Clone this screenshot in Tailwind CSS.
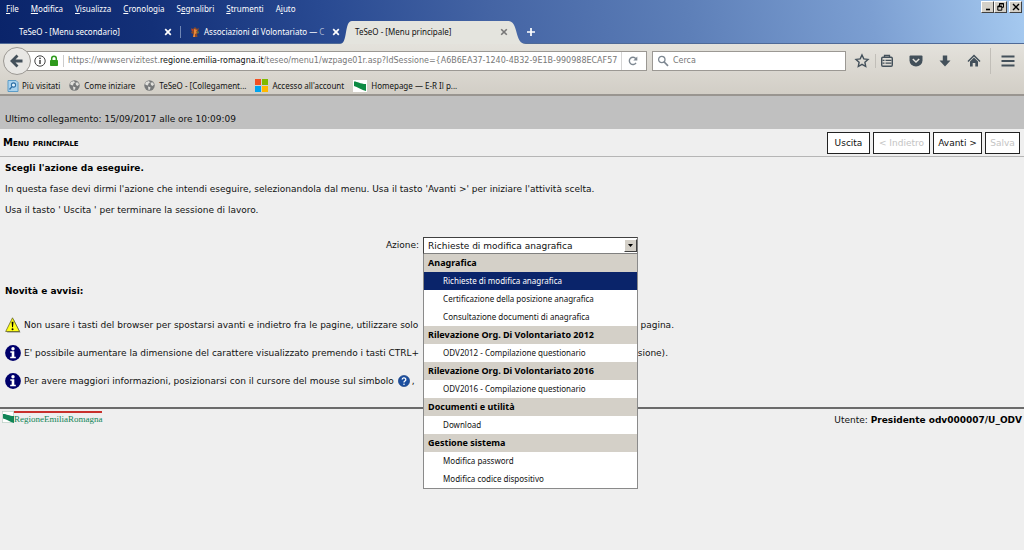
<!DOCTYPE html>
<html lang="it">
<head>
<meta charset="utf-8">
<title>TeSeO - [Menu principale]</title>
<script src="https://cdn.jsdelivr.net/npm/@tailwindcss/browser@4"></script>
</head>
<body class="min-h-screen bg-[#efefef] font-['DejaVu_Sans',sans-serif] text-[9px] leading-[21px] text-[#111]">

<!-- Browser window -->
<header class="font-['Noto_Sans',sans-serif] text-[8px] leading-3">
  <div class="bg-[linear-gradient(80deg,#0a246a_0%,#133078_15%,#294a92_32%,#4464a4_48%,#5d7fb8_67%,#7c9fd2_85%,#a6caf0_100%)] border-b border-[#4f6a97]">
    <div class="flex h-[21px] items-start justify-between">
      <nav class="flex gap-3 pl-1.5 pt-[3px] text-white" aria-label="Menu del browser">
        <button type="button"><u>F</u>ile</button>
        <button type="button"><u>M</u>odifica</button>
        <button type="button"><u>V</u>isualizza</button>
        <button type="button"><u>C</u>ronologia</button>
        <button type="button">S<u>e</u>gnalibri</button>
        <button type="button"><u>S</u>trumenti</button>
        <button type="button">A<u>i</u>uto</button>
      </nav>
      <div class="flex pr-0.5 pt-px">
        <button type="button" aria-label="Riduci a icona" class="flex h-3 w-[13px] items-center justify-center border border-t-white border-l-white border-r-[#404040] border-b-[#404040] bg-[#d4d0c8]"><svg class="h-2.5 w-2.5" viewBox="0 0 10 10"><path d="M3 7.500h4" stroke="#000" stroke-width="1.600"/></svg></button>
        <button type="button" aria-label="Ripristina" class="flex h-3 w-[13px] items-center justify-center border border-t-white border-l-white border-r-[#404040] border-b-[#404040] bg-[#d4d0c8]"><svg class="h-2.5 w-2.5" viewBox="0 0 10 10" fill="none" stroke="#000"><path d="M3.500 4V1.500h4v3.800H6"/><path d="M3.500 1.700h4M1.800 4.500h4" stroke-width="1.500"/><path d="M1.800 4.200h4v4h-4z"/></svg></button>
        <button type="button" aria-label="Chiudi" class="ml-0.5 flex h-3 w-[13px] items-center justify-center border border-t-white border-l-white border-r-[#404040] border-b-[#404040] bg-[#d4d0c8]"><svg class="h-2.5 w-2.5" viewBox="0 0 10 10"><path d="M2 2l6 6M8 2l-6 6" stroke="#000" stroke-width="1.400"/></svg></button>
      </div>
    </div>
    <div class="flex h-[22px] items-center">
      <div class="flex w-[180px] items-center justify-between pl-[19px] pr-2 text-white">
        <a href="#" class="whitespace-nowrap">TeSeO - [Menu secondario]</a>
        <button type="button" aria-label="Chiudi scheda"><svg class="h-2 w-2" viewBox="0 0 8 8"><path d="M1.200 1.200l5.600 5.600M6.800 1.200L1.200 6.800" stroke="#fff" stroke-width="1.700"/></svg></button>
      </div>
      <div class="flex w-[160px] items-center border-l border-[#7087b5] pl-2 text-white">
        <svg class="mr-[3px] h-3 w-3 shrink-0" viewBox="0 0 12 12"><path d="M2 2l2 1 2-2 2 2 2-1-1 3 1 2-2 1 .5 3H4l.5-3L2 7l1-2z" fill="#8a4a2a"/><path d="M5 3l3 1-1 2 1 1-2 1v3H4l1-4z" fill="#e8883a"/><circle cx="3.400" cy="4" r="1" fill="#c33d28"/><circle cx="9" cy="6.300" r="1" fill="#4d7a4b"/></svg>
        <a href="#" class="min-w-0 flex-1 whitespace-nowrap">Associazioni di Volontariato — <span class="text-white/60">C</span></a>
        <button type="button" aria-label="Chiudi scheda"><svg class="h-2 w-2" viewBox="0 0 8 8"><path d="M1.200 1.200l5.600 5.600M6.800 1.200L1.200 6.800" stroke="#fff" stroke-width="1.700"/></svg></button>
      </div>
      <div class="flex h-[23px] w-[186px] self-start text-[#111]">
        <svg class="h-[23px] w-3 shrink-0" viewBox="0 0 12 23"><path d="M0 23C8 23 4 0 12 0V23z" fill="#e4e4de"/></svg>
        <div class="flex min-w-0 flex-1 items-center justify-between bg-[#e4e4de] pb-0.5 pl-[3px]">
          <a href="#" class="whitespace-nowrap">TeSeO - [Menu principale]</a>
          <button type="button" aria-label="Chiudi scheda"><svg class="h-2 w-2" viewBox="0 0 8 8"><path d="M1.200 1.200l5.600 5.600M6.800 1.200L1.200 6.800" stroke="#777" stroke-width="1.600"/></svg></button>
        </div>
        <svg class="h-[23px] w-[18px] shrink-0" viewBox="0 0 18 23"><path d="M0 0C11 0 6 23 18 23H0z" fill="#e4e4de"/></svg>
      </div>
      <button type="button" aria-label="Nuova scheda"><svg class="h-2.5 w-2.5" viewBox="0 0 10 10"><path d="M5 1v8M1 5h8" stroke="#fff" stroke-width="1.700"/></svg></button>
    </div>
  </div>

  <div class="bg-linear-to-b from-[#e4e2dc] to-[#d2cec6] border-b-2 border-[#999590]">
    <div class="flex h-[33px] items-center pl-[3px] pr-[9px]">
      <button type="button" aria-label="Indietro" class="relative z-10 flex h-7 w-7 shrink-0 items-center justify-center rounded-full border border-[#9b9893] bg-[#e8e7e4]"><svg class="h-3.5 w-3.5" viewBox="0 0 14 14"><path d="M7.500 1.500L2 7l5.500 5.500M2.500 7h10" fill="none" stroke="#43505a" stroke-width="2.800"/></svg></button>
      <div class="-ml-2 flex h-5 min-w-0 flex-1 items-center border border-[#9b9893] bg-white pl-2.5 pr-2">
        <svg class="h-3 w-3 shrink-0" viewBox="0 0 12 12"><circle cx="6" cy="6" r="5.200" fill="none" stroke="#444"/><circle cx="6" cy="3.400" r=".8" fill="#333"/><path d="M6 5v4" stroke="#333" stroke-width="1.400"/></svg>
        <svg class="ml-[3px] h-3 w-2.5 shrink-0" viewBox="0 0 10 12"><path d="M2.700 6V3.600a2.300 2.300 0 0 1 4.600 0V6" fill="none" stroke="#2f9a1c" stroke-width="1.500"/><rect x="1" y="5" width="8" height="6" rx=".8" fill="#2f9a1c"/></svg>
        <span class="ml-1 h-3 border-l border-[#ccc]"></span>
        <div role="textbox" contenteditable="true" spellcheck="false" aria-label="Indirizzo" class="ml-1 min-w-0 flex-1 overflow-hidden whitespace-nowrap font-['DejaVu_Sans',sans-serif] text-[#777]">https://wwwservizitest.<span class="text-[#111]">regione.emilia-romagna.it</span>/teseo/menu1/wzpage01r.asp?IdSessione={A6B6EA37-1240-4B32-9E1B-990988ECAF57</div>
        <span class="mr-1.5 h-[18px] border-l border-[#d5d5d5]"></span>
        <button type="button" aria-label="Ricarica"><svg class="h-2.5 w-2.5" viewBox="0 0 10 10"><path d="M8 6.800A3.600 3.600 0 1 1 7.800 2.700" fill="none" stroke="#7d8791" stroke-width="1.400"/><path d="M9.300.5v4H5.300z" fill="#7d8791"/></svg></button>
      </div>
      <label class="ml-[5px] flex h-5 w-[194px] items-center border border-[#9b9893] bg-white pl-1">
        <svg class="mr-1 h-3 w-3 shrink-0" viewBox="0 0 12 12" fill="none" stroke="#7d8791"><circle cx="4.800" cy="4.500" r="3.200" stroke-width="1.300"/><path d="M7.200 7l3.800 3.800" stroke-width="1.700"/></svg>
        <input type="search" aria-label="Cerca" placeholder="Cerca" class="min-w-0 flex-1 font-['DejaVu_Sans',sans-serif] outline-none placeholder:text-[#777]">
      </label>
      <div class="ml-2 flex shrink-0 items-center text-[#43505a]">
        <button type="button" aria-label="Aggiungi ai segnalibri"><svg class="h-4 w-4" viewBox="0 0 16 16"><path d="M8 2l1.800 3.900 4.200.5-3.100 2.900.8 4.200L8 11.400l-3.700 2.100.8-4.200L2 6.400l4.200-.5z" fill="none" stroke="currentColor" stroke-width="1.400"/></svg></button>
        <span class="ml-[5px] h-3.5 border-l border-[#c1beb8]"></span>
        <button type="button" aria-label="Segnalibri" class="ml-1"><svg class="h-3.5 w-3.5" viewBox="0 0 14 14" fill="none" stroke="currentColor"><path d="M4.500 3V1.500h5V3" stroke-width="1.300"/><rect x="1.700" y="3.200" width="10.600" height="9" rx="1.200" stroke-width="1.400"/><path d="M2.500 6.300h2M5.500 6.300h6M2.500 9.200h2M5.500 9.200h6" stroke-width="1.300"/></svg></button>
        <button type="button" aria-label="Pocket" class="ml-[15px]"><svg class="h-3.5 w-3.5" viewBox="0 0 14 14"><path d="M1.500 1.500h11q1 0 1 1V6.500a6.500 6 0 0 1-13 0v-4q0-1 1-1z" fill="currentColor"/><path d="M3.800 5L7 8l3.200-3" fill="none" stroke="#e4e2dc" stroke-width="1.500"/></svg></button>
        <button type="button" aria-label="Download" class="ml-[15px]"><svg class="h-3.5 w-3.5" viewBox="0 0 14 14"><path d="M4.800 1.500h4.400V6.500H12.500L7 12.500 1.500 6.500h3.300z" fill="currentColor"/></svg></button>
        <button type="button" aria-label="Pagina iniziale" class="ml-[15px]"><svg class="h-3.5 w-3.5" viewBox="0 0 14 14"><path d="M1 7.500l6-6 6 6" fill="none" stroke="currentColor" stroke-width="1.500"/><path d="M3 7.500l4-4 4 4v5H8.300V9H5.700v3.500H3z" fill="currentColor"/></svg></button>
        <span class="ml-[9px] h-[26px] border-l border-[#c1beb8]"></span>
        <button type="button" aria-label="Apri menu" class="ml-2.5"><svg class="h-3.5 w-3.5" viewBox="0 0 14 14"><path d="M.5 2.500h13M.5 7h13M.5 11.500h13" stroke="currentColor" stroke-width="2.200"/></svg></button>
      </div>
    </div>
    <nav class="flex h-[17px] items-center gap-[9px] pl-[7px] text-[#111]" aria-label="Segnalibri">
      <a href="#" class="flex items-center gap-[3px]"><svg class="h-3 w-3" viewBox="0 0 12 12"><path d="M1 .5h8l2 2v9H1z" fill="#a9d2ee" stroke="#5c9cc7"/><circle cx="6.500" cy="5" r="2.100" fill="#e2f2fc" stroke="#2e6fa5" stroke-width="1.100"/><path d="M5 6.600L2.500 9.500" stroke="#2e6fa5" stroke-width="1.400"/></svg>Più visitati</a>
      <a href="#" class="flex items-center gap-1"><svg class="h-[11px] w-[11px]" viewBox="0 0 11 11"><circle cx="5.500" cy="5.500" r="5.200" fill="#77797a"/><path d="M2 2l3-1 1 1.500-1.500 1L4 5.500 2 5 1 4zM6.500 2.500L9 2.500l1 2L8.500 6 7 5zM4 6.500l2.500.8L6 9.500l-1.500.5z" fill="#e0dfdb"/></svg>Come iniziare</a>
      <a href="#" class="flex items-center gap-1"><svg class="h-[11px] w-[11px]" viewBox="0 0 11 11"><circle cx="5.500" cy="5.500" r="5.200" fill="#77797a"/><path d="M2 2l3-1 1 1.500-1.500 1L4 5.500 2 5 1 4zM6.500 2.500L9 2.500l1 2L8.500 6 7 5zM4 6.500l2.500.8L6 9.500l-1.500.5z" fill="#e0dfdb"/></svg>TeSeO - [Collegament...</a>
      <a href="#" class="flex items-center gap-1"><svg class="h-[13px] w-[13px]" viewBox="0 0 13 13"><path d="M0 0h6v6H0z" fill="#f25022"/><path d="M7 0h6v6H7z" fill="#7fba00"/><path d="M0 7h6v6H0z" fill="#00a4ef"/><path d="M7 7h6v6H7z" fill="#ffb900"/></svg>Accesso all'account</a>
      <a href="#" class="flex items-center gap-1"><svg class="h-3 w-3.5" viewBox="0 0 14 12"><path d="M0 0h14v12H0z" fill="#fff"/><path d="M1 1.500c4 0 6 2.500 12 2.500v7C9 10 4 7 1 6z" fill="#0d8a43"/></svg>Homepage — E-R Il p...</a>
    </nav>
  </div>
</header>

<!-- Page -->
<div class="flex h-[33px] items-end bg-[#c0c0c0] pl-[5px] leading-[19px]">Ultimo collegamento: 15/09/2017 alle ore 10:09:09</div>
<div class="flex h-7 items-center justify-between border-b border-[#b5b5b5] pl-[3px] pr-1">
  <h1 class="text-[10px] font-bold text-black [font-variant:small-caps]">Menu principale</h1>
  <div class="flex gap-[3px] leading-3">
    <button type="button" class="h-[22px] w-[43px] border border-[#222] bg-white">Uscita</button>
    <button type="button" disabled class="h-[22px] w-[57px] border border-[#222] bg-white text-[#c4c4c4]">&lt; Indietro</button>
    <button type="button" class="h-[22px] w-[49px] border border-[#222] bg-white">Avanti &gt;</button>
    <button type="button" disabled class="h-[22px] w-[35px] border border-[#222] bg-white text-[#c4c4c4]">Salva</button>
  </div>
</div>

<main class="px-[5px] pt-px">
  <h2 class="font-bold text-black">Scegli l'azione da eseguire.</h2>
  <p>In questa fase devi dirmi l'azione che intendi eseguire, selezionandola dal menu. Usa il tasto 'Avanti &gt;' per iniziare l'attività scelta.</p>
  <p>Usa il tasto ' Uscita ' per terminare la sessione di lavoro.</p>

  <div class="mt-4 flex h-[17px] items-center justify-center gap-1">
    <label for="azione">Azione:</label>
    <div class="relative w-[215px]">
      <select id="azione" class="block h-[17px] w-full appearance-none border border-[#808080] border-t-[#404040] border-l-[#404040] bg-white pl-1 leading-3">
        <optgroup label="Anagrafica"><option>Richieste di modifica anagrafica</option><option>Certificazione della posizione anagrafica</option><option>Consultazione documenti di anagrafica</option></optgroup>
        <optgroup label="Rilevazione Org. Di Volontariato 2012"><option>ODV2012 - Compilazione questionario</option></optgroup>
        <optgroup label="Rilevazione Org. Di Volontariato 2016"><option>ODV2016 - Compilazione questionario</option></optgroup>
        <optgroup label="Documenti e utilità"><option>Download</option></optgroup>
        <optgroup label="Gestione sistema"><option>Modifica password</option><option>Modifica codice dispositivo</option></optgroup>
      </select>
      <span class="pointer-events-none absolute right-px top-0.5 flex h-[13px] w-[13px] items-center justify-center border border-t-white border-l-white border-r-[#404040] border-b-[#404040] bg-[#d4d0c8]"><svg class="h-[3px] w-[5px]" viewBox="0 0 5 3"><path d="M0 0h5L2.500 3z"/></svg></span>
      <ul role="listbox" aria-label="Azione" class="absolute inset-x-0 top-full z-10 border-x border-b border-[#8a8a8a] bg-white font-['Noto_Sans',sans-serif] text-[8px] leading-[18px] text-[#111]">
        <li class="bg-[#d4d0c8] pl-1 text-[9px] font-bold text-black">Anagrafica</li>
        <li role="option" aria-selected="true" class="bg-[#0a246a] pl-[19px] text-white">Richieste di modifica anagrafica</li>
        <li role="option" class="pl-[19px]">Certificazione della posizione anagrafica</li>
        <li role="option" class="pl-[19px]">Consultazione documenti di anagrafica</li>
        <li class="bg-[#d4d0c8] pl-1 text-[9px] font-bold text-black">Rilevazione Org. Di Volontariato 2012</li>
        <li role="option" class="pl-[19px]">ODV2012 - Compilazione questionario</li>
        <li class="bg-[#d4d0c8] pl-1 text-[9px] font-bold text-black">Rilevazione Org. Di Volontariato 2016</li>
        <li role="option" class="pl-[19px]">ODV2016 - Compilazione questionario</li>
        <li class="bg-[#d4d0c8] pl-1 text-[9px] font-bold text-black">Documenti e utilità</li>
        <li role="option" class="pl-[19px]">Download</li>
        <li class="bg-[#d4d0c8] pl-1 text-[9px] font-bold text-black">Gestione sistema</li>
        <li role="option" class="pl-[19px]">Modifica password</li>
        <li role="option" class="pl-[19px]">Modifica codice dispositivo</li>
      </ul>
    </div>
  </div>

  <h2 class="mt-[27px] font-bold text-black">Novità e avvisi:</h2>
  <ul class="mt-[9px]">
    <li class="flex h-7 max-w-[669px] items-center gap-[3px]">
      <svg class="h-4 w-4 shrink-0" viewBox="0 0 16 16"><path d="M8.500 2L15.500 15.500H2z" fill="#888"/><path d="M7.500.8L14.500 14.500H.7z" fill="#ffff1a" stroke="#55551a" stroke-width=".7" stroke-linejoin="round"/><path d="M6.600 4.800h1.900L8 10.200h-.9z" fill="#000"/><circle cx="7.550" cy="12.200" r="1" fill="#000"/></svg>
      <span>Non usare i tasti del browser per spostarsi avanti e indietro fra le pagine, utilizzare solo</span>
      <span class="ml-auto">pagina.</span>
    </li>
    <li class="flex h-7 max-w-[663px] items-center gap-[3px]">
      <svg class="h-4 w-4 shrink-0" viewBox="0 0 16 16"><circle cx="8" cy="8" r="7.900" fill="#00006b"/><circle cx="8" cy="3.700" r="1.700" fill="#fff"/><path d="M5.300 6.300h4v5.500h1.500v1.400H5.200v-1.400h1.500V7.700H5.300z" fill="#fff"/></svg>
      <span>E' possibile aumentare la dimensione del carattere visualizzato premendo i tasti CTRL+</span>
      <span class="ml-auto">sione).</span>
    </li>
    <li class="flex h-7 items-center gap-[3px]">
      <svg class="h-4 w-4 shrink-0" viewBox="0 0 16 16"><circle cx="8" cy="8" r="7.900" fill="#00006b"/><circle cx="8" cy="3.700" r="1.700" fill="#fff"/><path d="M5.300 6.300h4v5.500h1.500v1.400H5.200v-1.400h1.500V7.700H5.300z" fill="#fff"/></svg>
      <span class="flex items-center">Per avere maggiori informazioni, posizionarsi con il cursore del mouse sul simbolo
        <svg class="ml-1 mr-0.5 h-3 w-3" viewBox="0 0 12 12"><circle cx="6" cy="6" r="5.600" fill="#1c4f9f" stroke="#123a7c" stroke-width=".6"/><path d="M4.200 4.600a1.800 1.700 0 1 1 2.600 1.500Q6 6.500 6 7.400" fill="none" stroke="#fff" stroke-width="1.300"/><circle cx="6" cy="9.200" r=".8" fill="#fff"/></svg>,</span>
    </li>
  </ul>
</main>

<footer class="mt-3 flex items-start justify-between border-t-2 border-[#6b6b6b] pl-0.5 pr-0.5">
  <a href="#" aria-label="Regione Emilia-Romagna" class="mt-0.5 flex items-start">
    <svg class="h-3 w-3 shrink-0" viewBox="0 0 12 12"><path d="M.3.3h11.400v11.400H.3z" fill="#fff" stroke="#9ab8a8" stroke-width=".6"/><path d="M1 3c4 0 6 2 11 2v7C8 11 4 8 1 7.500z" fill="#0f8557"/></svg>
    <span class="border-t-2 border-[#c8302c] font-['Liberation_Serif',serif] text-[9px] leading-[13px] text-[#0f8557]">RegioneEmiliaRomagna</span>
  </a>
  <p class="pt-px">Utente: <strong class="text-black">Presidente odv000007/U_ODV</strong></p>
</footer>
</body>
</html>
